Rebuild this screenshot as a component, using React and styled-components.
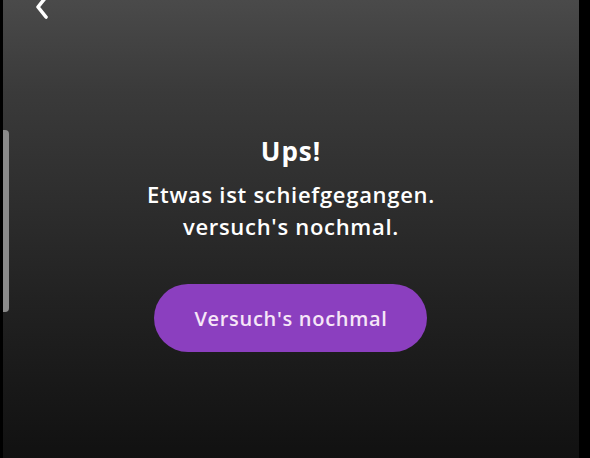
import React from "react";
import styled, { createGlobalStyle } from "styled-components";

const Global = createGlobalStyle`
  html, body { margin: 0; padding: 0; background: #000; }
  body { width: 590px; height: 458px; overflow: hidden; }
  #root { width: 590px; height: 458px; }
`;

const Frame = styled.div`
  width: 590px;
  height: 458px;
  display: flex;
  background: #000;
`;

const Screen = styled.div`
  position: relative;
  margin-left: 3px;
  width: 576px;
  height: 458px;
  background: linear-gradient(180deg, #4a4a4a 0%, #3a3a3a 20%, #2d2d2d 45%, #222 65%, #181818 85%, #111 100%);
  display: flex;
  flex-direction: column;
  align-items: center;
  font-family: "Open Sans", "Lato", sans-serif;
  color: #fff;
`;

const BackButton = styled.button`
  position: absolute;
  left: 28px;
  top: -6px;
  width: 24px;
  height: 28px;
  padding: 0;
  border: 0;
  background: none;
  display: flex;
`;

const SideHandle = styled.div`
  position: absolute;
  left: 0;
  top: 130px;
  width: 6px;
  height: 182px;
  border-radius: 0 4px 4px 0;
  background: #8a8a8a;
`;

const Content = styled.div`
  margin-top: 133px;
  display: flex;
  flex-direction: column;
  align-items: center;
`;

const Title = styled.h1`
  margin: 0;
  font-size: 26px;
  font-weight: 700;
  line-height: 36px;
  letter-spacing: 1px;
`;

const Message = styled.p`
  margin: 9px 0 0;
  font-size: 22px;
  font-weight: 600;
  line-height: 32px;
  letter-spacing: 0.7px;
  text-align: center;
`;

const RetryButton = styled.button`
  margin-top: 42px;
  width: 273px;
  height: 68px;
  border: 0;
  border-radius: 34px;
  background: #8b3fbf;
  color: #f6e6f7;
  font-family: inherit;
  font-size: 20px;
  font-weight: 600;
  letter-spacing: 0.7px;
`;

export default function App() {
  return (
    <>
      <Global />
      <Frame>
        <Screen>
          <BackButton aria-label="Zurück">
            <svg width="24" height="28" viewBox="0 0 24 28">
              <path d="M15 3 L7 13 L15 23" fill="none" stroke="#fff" strokeWidth="3.6" strokeLinecap="round" strokeLinejoin="round" />
            </svg>
          </BackButton>
          <SideHandle />
          <Content>
            <Title>Ups!</Title>
            <Message>
              Etwas ist schiefgegangen.
              <br />
              versuch's nochmal.
            </Message>
            <RetryButton>Versuch's nochmal</RetryButton>
          </Content>
        </Screen>
      </Frame>
    </>
  );
}
